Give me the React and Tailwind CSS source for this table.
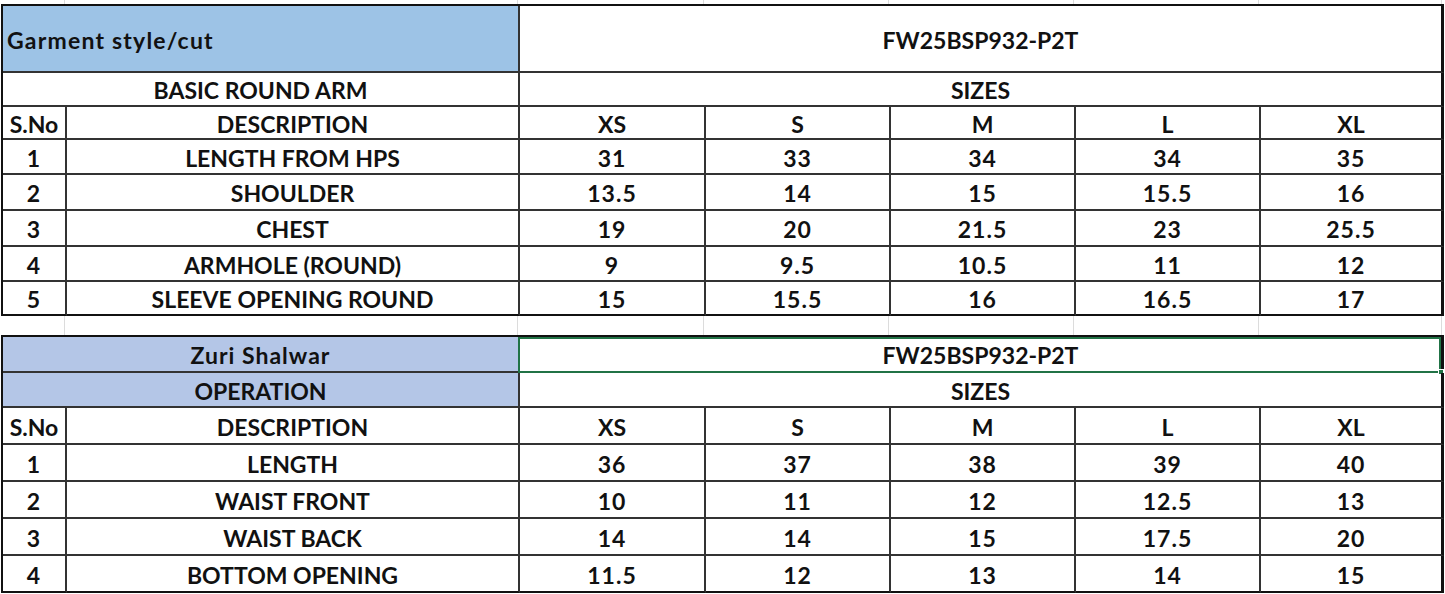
import React from 'react';

const sizes = ['XS', 'S', 'M', 'L', 'XL'];

const topRows = [
  { n: 1, d: 'LENGTH FROM HPS', v: ['31', '33', '34', '34', '35'] },
  { n: 2, d: 'SHOULDER', v: ['13.5', '14', '15', '15.5', '16'] },
  { n: 3, d: 'CHEST', v: ['19', '20', '21.5', '23', '25.5'] },
  { n: 4, d: 'ARMHOLE (ROUND)', v: ['9', '9.5', '10.5', '11', '12'] },
  { n: 5, d: 'SLEEVE OPENING ROUND', v: ['15', '15.5', '16', '16.5', '17'] },
];

const bottomRows = [
  { n: 1, d: 'LENGTH', v: ['36', '37', '38', '39', '40'] },
  { n: 2, d: 'WAIST FRONT', v: ['10', '11', '12', '12.5', '13'] },
  { n: 3, d: 'WAIST BACK', v: ['14', '14', '15', '17.5', '20'] },
  { n: 4, d: 'BOTTOM OPENING', v: ['11.5', '12', '13', '14', '15'] },
];

const cols = 'grid grid-cols-[64px_453px_186px_185px_185px_185px_183px]';

// one spreadsheet cell; last = touches the right edge, bottom = last row
const Cell = ({ children, className = '', last, bottom }) => (
  <div
    className={`relative flex items-center justify-center pt-[3px] border-b-2 ${
      bottom ? 'border-b-[#111]' : 'border-b-[#333]'
    } ${last ? 'border-r-[3px] border-r-[#111]' : 'border-r-2 border-r-[#333]'} ${className}`}
  >
    {children}
  </div>
);

// faint excel gridlines outside the tables
const Gridlines = ({ h }) => (
  <div className={`${cols} ${h} ml-px`}>
    <div className="border-r border-[#dcdcdc]" />
    <div className="border-r border-[#dcdcdc]" />
    <div className="border-r border-[#dcdcdc]" />
    <div className="border-r border-[#dcdcdc]" />
    <div className="border-r border-[#dcdcdc]" />
    <div className="border-r border-[#dcdcdc]" />
    <div className="border-r border-[#dcdcdc]" />
  </div>
);

const DataRows = ({ rows }) =>
  rows.map((r, i) => {
    const bottom = i === rows.length - 1;
    return (
      <React.Fragment key={r.n}>
        <Cell bottom={bottom} className="tracking-[1px]">{r.n}</Cell>
        <Cell bottom={bottom}>{r.d}</Cell>
        {r.v.map((v, j) => (
          <Cell key={j} bottom={bottom} last={j === 4} className="tracking-[1px]">
            {v}
          </Cell>
        ))}
      </React.Fragment>
    );
  });

const SizeHeader = () => (
  <>
    <Cell>S.No</Cell>
    <Cell>DESCRIPTION</Cell>
    {sizes.map((s, j) => (
      <Cell key={s} last={j === 4}>
        {s}
      </Cell>
    ))}
  </>
);

export default function App() {
  return (
    <div className="w-[1445px] h-[594px] overflow-hidden bg-white font-['Lato',sans-serif] font-bold text-[23px] text-[#111]">
      <Gridlines h="h-[4px]" />

      {/* garment table */}
      <div
        className={`${cols} grid-rows-[67px_34px_33px_35px_36px_36px_35px_34px] ml-px w-max border-l-2 border-t-2 border-[#111]`}
      >
        <Cell className="col-span-2 !justify-start pl-[4px] tracking-[1.2px] bg-[#9dc3e6]">Garment style/cut</Cell>
        <Cell className="col-span-5" last>
          FW25BSP932-P2T
        </Cell>
        <Cell className="col-span-2">BASIC ROUND ARM</Cell>
        <Cell className="col-span-5" last>
          SIZES
        </Cell>
        <SizeHeader />
        <DataRows rows={topRows} />
      </div>

      <Gridlines h="h-[19px]" />

      {/* shalwar table */}
      <div
        className={`${cols} grid-rows-[36px_35px_37px_37px_37px_37px_37px] ml-px w-max border-l-2 border-t-2 border-[#111]`}
      >
        <Cell className="col-span-2 tracking-[1px] bg-[#b4c6e7]">Zuri Shalwar</Cell>
        <Cell className="col-span-5" last>
          FW25BSP932-P2T
          <div className="absolute -left-[2px] top-0 right-0 -bottom-[2px] border-2 border-[#217346]" />
          <div className="absolute -right-[3px] -bottom-[4px] w-[6px] h-[6px] bg-[#217346] border border-white" />
        </Cell>
        <Cell className="col-span-2 bg-[#b4c6e7]">OPERATION</Cell>
        <Cell className="col-span-5" last>
          SIZES
        </Cell>
        <SizeHeader />
        <DataRows rows={bottomRows} />
      </div>
    </div>
  );
}
